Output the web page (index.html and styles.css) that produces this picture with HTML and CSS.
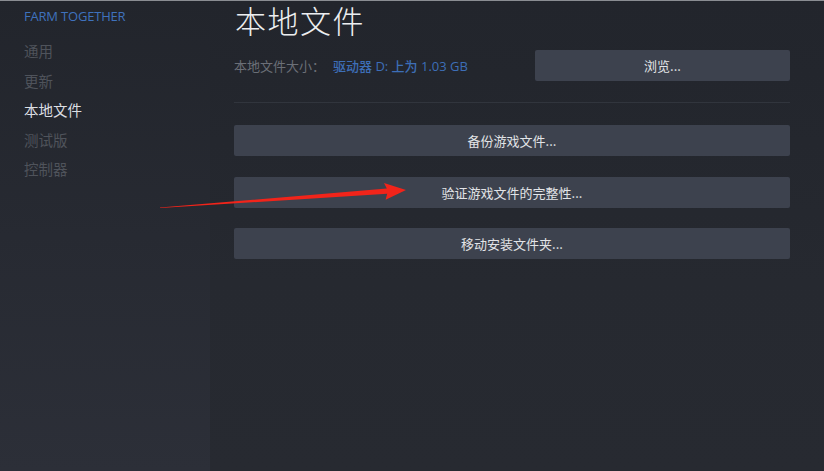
FILE: index.html
```html
<!DOCTYPE html>
<html lang="zh-CN">
<head>
<meta charset="utf-8">
<link rel="stylesheet" href="styles.css">
</head>
<body>
<div class="window">
  <aside class="sidebar">
    <div class="game-title">FARM TOGETHER</div>
    <ul class="nav">
      <li class="nav-item">通用</li>
      <li class="nav-item">更新</li>
      <li class="nav-item active">本地文件</li>
      <li class="nav-item">测试版</li>
      <li class="nav-item">控制器</li>
    </ul>
  </aside>
  <main class="main">
    <h1 class="title">本地文件</h1>
    <div class="size-row">
      <div class="size-text"><span class="size-label">本地文件大小：</span><span class="size-value">驱动器 D: 上为 1.03 GB</span></div>
      <button class="btn btn-browse">浏览...</button>
    </div>
    <div class="separator"></div>
    <div class="actions">
      <button class="btn">备份游戏文件...</button>
      <button class="btn">验证游戏文件的完整性...</button>
      <button class="btn">移动安装文件夹...</button>
    </div>
  </main>
  <svg class="arrow" width="824" height="471" viewBox="0 0 824 471">
    <polygon points="160,207.6 386.8,188.6 384,183 406,190 385.6,199.8 387.2,193.8 160,208" fill="#f2241a"/>
  </svg>
</div>
</body>
</html>
```

FILE: styles.css
```css
* { box-sizing: border-box; }
html, body {
  margin: 0;
  padding: 0;
  width: 824px;
  height: 471px;
  overflow: hidden;
  background: #24272e;
  font-family: "Noto Sans CJK SC", "Noto Sans", sans-serif;
}
.window {
  position: relative;
  display: flex;
  width: 824px;
  height: 471px;
  border-top: 1px solid #8a8d92;
}
.sidebar {
  width: 210px;
  flex: none;
  background: linear-gradient(180deg, #22252c 0%, #272a32 50%, #2c2f38 100%);
  padding: 6px 0 0 24px;
}
.game-title {
  font-family: "Open Sans", "Noto Sans", sans-serif;
  font-size: 13px;
  line-height: 18px;
  color: #3f72bd;
  letter-spacing: -0.2px;
}
.nav {
  list-style: none;
  margin: 16px 0 0 0;
  padding: 0;
  display: flex;
  flex-direction: column;
  gap: 9.6px;
}
.nav-item {
  font-size: 14.5px;
  line-height: 20px;
  color: #4f535b;
}
.nav-item.active { color: #dcdfe3; }
.main {
  flex: 1;
  background: linear-gradient(180deg, #22252c 0%, #262930 60%, #272a31 100%);
  padding: 2px 34px 0 24px;
  display: flex;
  flex-direction: column;
}
.title {
  margin: 0;
  font-size: 31px;
  font-weight: 300;
  line-height: 34px;
  color: #eceef0;
  letter-spacing: 1.5px;
  padding-left: 1px;
}
.size-row {
  margin-top: 13px;
  display: flex;
  justify-content: space-between;
  align-items: center;
  height: 31px;
}
.size-text { font-size: 13px; line-height: 18px; padding-top: 1px; }
.size-label { color: #6b6f77; }
.size-value { color: #3d6eb7; margin-left: 8px; font-weight: 500; font-family: "Open Sans", "Noto Sans CJK SC", sans-serif; }
.btn {
  display: block;
  height: 31px;
  border: none;
  border-radius: 2px;
  background: #3d424e;
  color: #e2e4e7;
  font-family: "Noto Sans CJK SC", sans-serif;
  font-size: 13px;
  padding: 0;
  text-align: center;
}
.btn-browse { width: 255px; }
.separator {
  margin-top: 21px;
  height: 1px;
  background: #31353d;
}
.actions {
  margin-top: 22px;
  display: flex;
  flex-direction: column;
  gap: 20.5px;
}
.arrow {
  position: absolute;
  left: 0;
  top: -1px;
  pointer-events: none;
}
```
